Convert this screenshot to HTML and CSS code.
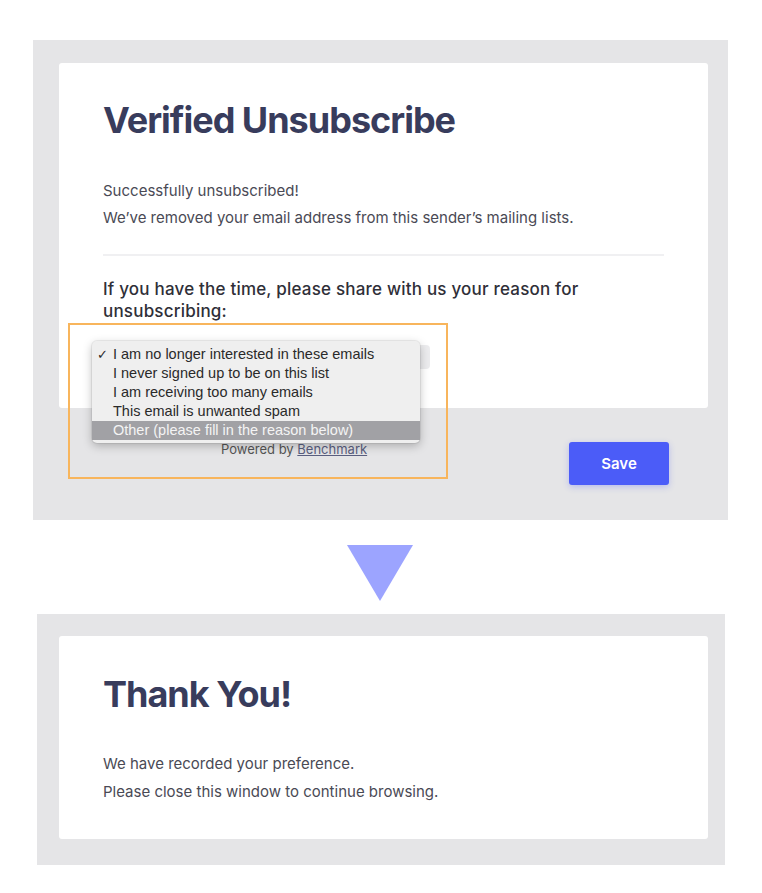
FILE: index.html
```html
<!DOCTYPE html>
<html lang="en">
<head>
  <meta charset="UTF-8" />
  <meta name="viewport" content="width=device-width, initial-scale=1" />
  <title>Verified Unsubscribe</title>
  <link rel="stylesheet" href="styles.css">
</head>
<body>
  <div class="page">
    <div class="panel panel-top">
      <div class="card card-top">
        <h1>Verified Unsubscribe</h1>
        <p class="msg">Successfully unsubscribed!</p>
        <p class="msg">We&rsquo;ve removed your email address from this sender&rsquo;s mailing lists.</p>
        <hr class="divider">
        <h2>If you have the time, please share with us your reason for unsubscribing:</h2>
        <div class="select-box"></div>
      </div>
      <div class="footer">
        <div class="powered">Powered by <a href="#">Benchmark</a></div>
        <button class="save">Save</button>
      </div>

      <!-- open dropdown, shown over the form -->
      <ul class="menu">
        <li class="checked">I am no longer interested in these emails</li>
        <li>I never signed up to be on this list</li>
        <li>I am receiving too many emails</li>
        <li>This email is unwanted spam</li>
        <li class="active">Other (please fill in the reason below)</li>
      </ul>
      <div class="highlight"></div>
    </div>

    <div class="arrow"></div>

    <div class="panel panel-bottom">
      <div class="card card-bottom">
        <h1>Thank You!</h1>
        <p class="msg">We have recorded your preference.</p>
        <p class="msg">Please close this window to continue browsing.</p>
      </div>
    </div>
  </div>
</body>
</html>
```

FILE: styles.css
```css
body { margin: 0; font-family: Inter, "Liberation Sans", sans-serif; background: #fff; }
.page { width: 762px; padding-top: 40px; }

.panel { background: #e5e5e7; box-sizing: border-box; position: relative; }
.panel-top { margin-left: 33px; width: 695px; height: 480px; padding: 23px 20px 0 26px; }
.panel-bottom { margin-left: 37px; width: 688px; height: 251px; padding: 22px 17px 0 22px; }

.card { background: #fff; border-radius: 3px; box-sizing: border-box; padding: 0 44px; }
.card-top { height: 345px; padding-top: 35px; }
.card-bottom { height: 203px; padding-top: 36px; }

h1 { margin: 0 0 35px; font-size: 36px; font-weight: 700; color: #383c5c; letter-spacing: -1px; line-height: 44px; }
.card-bottom h1 { margin-bottom: 34px; }
.msg { margin: 0; font-size: 15px; line-height: 27px; color: #4a4a55; letter-spacing: 0; }
.card-bottom .msg { line-height: 28px; }

.divider { border: 0; border-top: 2px solid #f0f0f2; margin: 23px 0 0; }

h2 { margin: 22px 0 0; font-size: 17px; font-weight: 500; color: #2f2f38; line-height: 22px; letter-spacing: 0.2px; }

.select-box { margin-top: 23px; width: 327px; height: 24px; background: #ececee; border-radius: 4px; }

.footer { display: flex; align-items: flex-start; }
.powered { margin: 33px 0 0 162px; font-size: 13px; line-height: 16px; color: #555; }
.powered a { color: #5a5f80; }
.save { margin: 34px 39px 0 auto; width: 100px; height: 43px; border: 0; border-radius: 3px; background: #4b5cf8; color: #fff; font-family: inherit; font-size: 15px; font-weight: 600; box-shadow: 0 2px 6px rgba(75, 92, 248, 0.3); }

.menu { position: absolute; left: 59px; top: 301px; width: 328px; margin: 0; padding: 4px 0 3px; list-style: none; background: #efefef; border-radius: 5px; box-shadow: 0 3px 10px rgba(0, 0, 0, 0.25), 0 0 0 1px rgba(0, 0, 0, 0.06); box-sizing: border-box; font-family: "Liberation Sans", sans-serif; font-size: 14.5px; color: #2a2a2a; }
.menu li { height: 19px; line-height: 19px; padding-left: 21px; position: relative; }
.menu li.checked::before { content: "\2713"; position: absolute; left: 5px; font-size: 13px; }
.menu li.active { background: #a1a1a5; color: #f4f4f4; }

.highlight { position: absolute; left: 35px; top: 283px; width: 380px; height: 156px; border: 2px solid #f8b55c; box-sizing: border-box; }

.arrow { margin: 25px 0 0 347px; width: 0; height: 0; border-left: 33px solid transparent; border-right: 33px solid transparent; border-top: 56px solid #9ca4ff; }
.panel-bottom { margin-top: 13px; }
```
